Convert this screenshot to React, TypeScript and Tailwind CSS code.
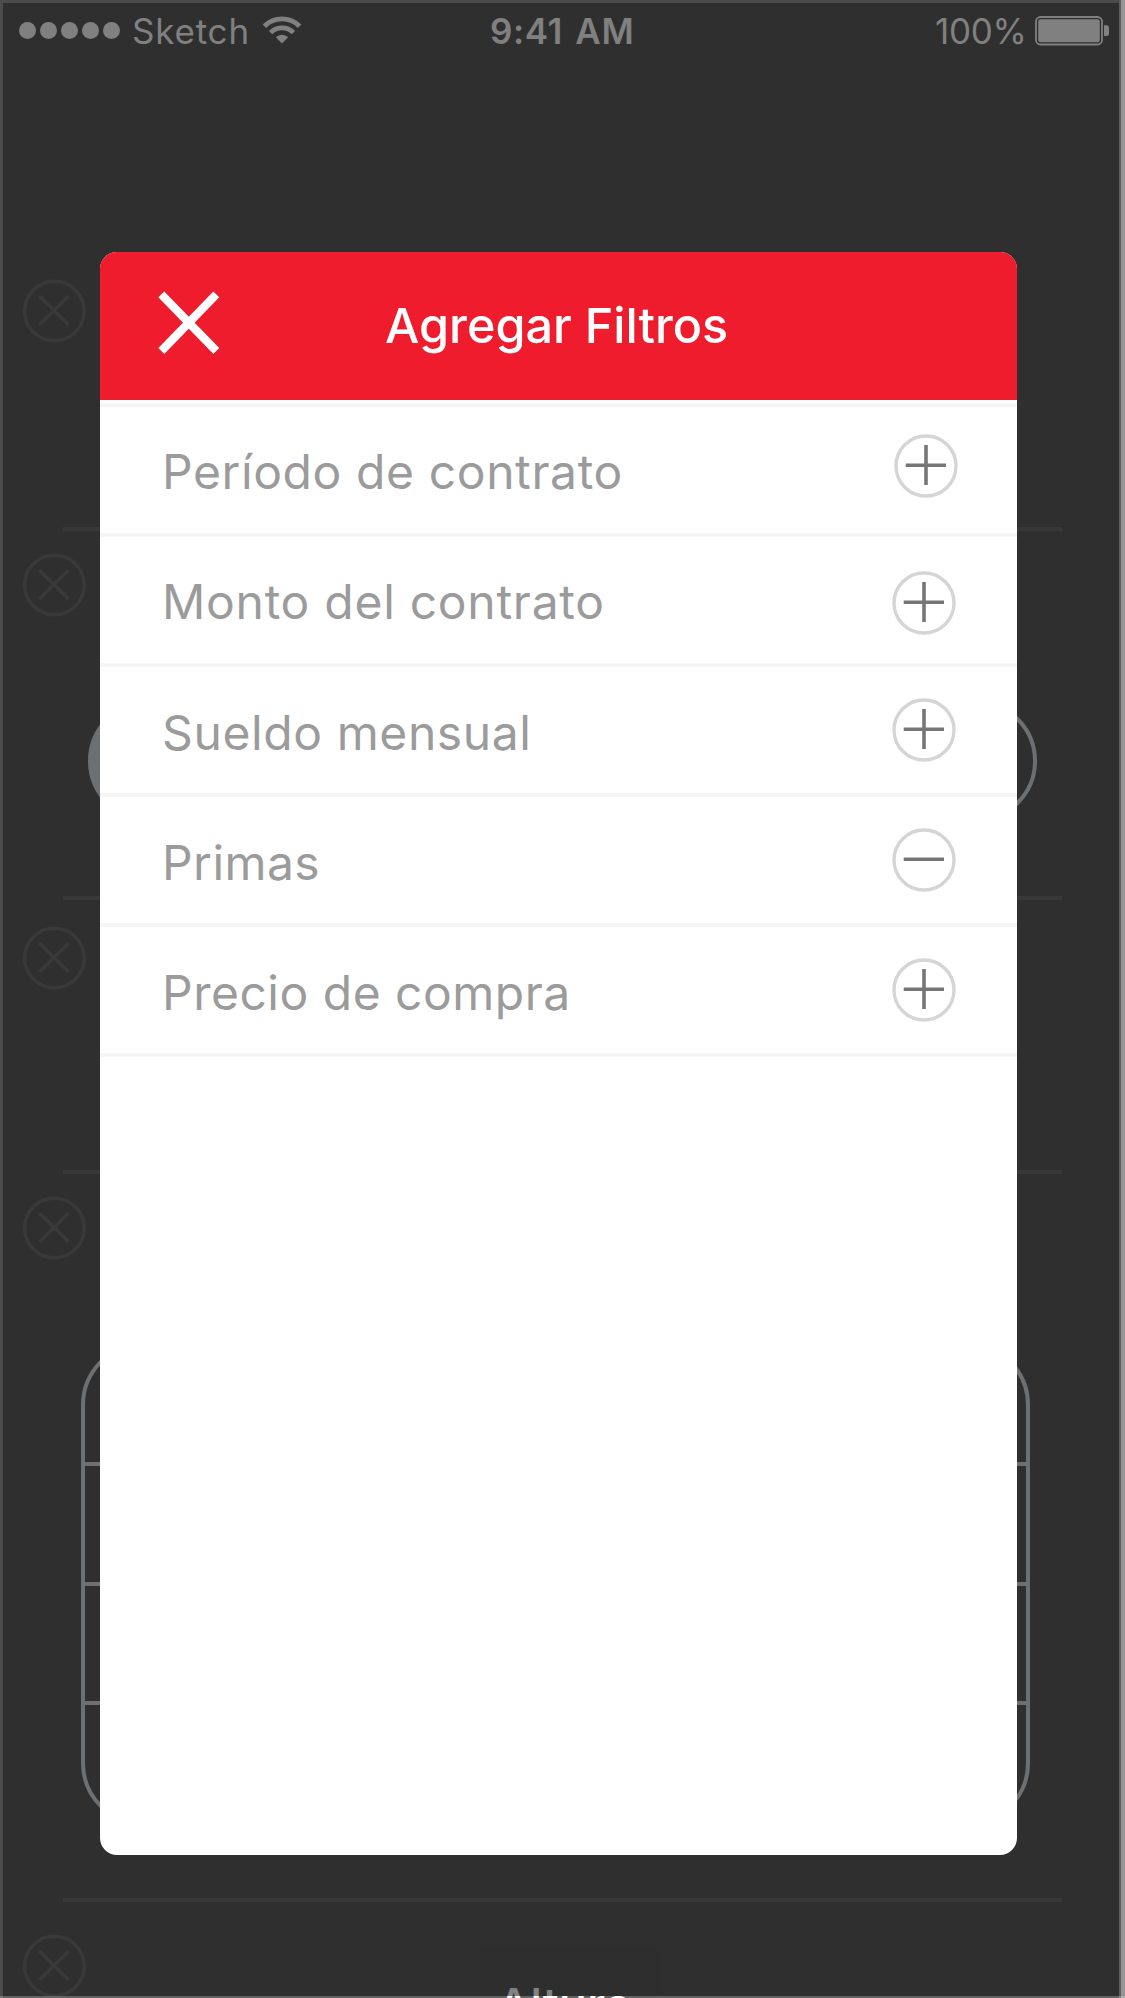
type Row = { label: string; labelClass: string; iconClass: string; open?: boolean };

const rows: Row[] = [
  { label: 'Período de contrato', labelClass: 'mt-[5px] tracking-[0.6px]', iconClass: 'mb-[8px] mr-[59px]' },
  { label: 'Monto del contrato', labelClass: 'mt-[5px] tracking-[0.72px]', iconClass: 'mt-[7px] mr-[61px]' },
  { label: 'Sueldo mensual', labelClass: 'mt-[7px] tracking-[0.6px]', iconClass: 'mt-[1px] mr-[61px]' },
  { label: 'Primas', labelClass: 'mt-[7px] tracking-[0.45px]', iconClass: 'mt-[1px] mr-[61px]', open: true },
  { label: 'Precio de compra', labelClass: 'mt-[7px] tracking-[0.5px]', iconClass: 'mt-[1px] mr-[61px]' },
];

function ToggleIcon({ minus, className }: { minus?: boolean; className: string }) {
  return (
    <svg className={`h-16 w-16 shrink-0 ${className}`} viewBox="0 0 64 64" fill="none">
      <circle cx="32" cy="32" r="30" stroke="#d5d5d5" strokeWidth="3.4" />
      <path d="M11.7 31.2H52" stroke="#767676" strokeWidth="3.6" />
      {!minus && <path d="M32 11V51" stroke="#767676" strokeWidth="3.6" />}
    </svg>
  );
}

function RemoveIcon() {
  return (
    <svg className="ml-[22px] h-16 w-16 shrink-0" viewBox="0 0 64 64" fill="none" stroke="#393939" strokeWidth="3.5">
      <circle cx="32.4" cy="32" r="29.8" />
      <path d="M17.4 17L46.6 46M46.6 17L17.4 46" />
    </svg>
  );
}

function Divider() {
  return <div className="mx-[63px] h-1 shrink-0 bg-[#383838]" />;
}

function StatusBar() {
  return (
    <header className="flex h-[57px] shrink-0 items-center text-[35px] leading-none text-[#808080]">
      <div className="flex w-[375px] items-center pl-[19px]">
        <div className="mt-[4px] flex gap-1">
          {[0, 1, 2, 3, 4].map((i) => (
            <span key={i} className="h-[17px] w-[17px] rounded-full bg-[#808080]" />
          ))}
        </div>
        <span className="mt-[6px] ml-[12px] w-[118px] tracking-[0.8px] whitespace-nowrap">Sketch</span>
        <svg className="mt-[3px] ml-[12px] h-[28px] w-[40px]" viewBox="262 16 40 28" fill="none" stroke="#808080">
          <path d="M264.4 26.2A24.9 24.9 0 0 1 299.6 26.2" strokeWidth="4.8" />
          <path d="M270.6 32.6A16 16 0 0 1 293.4 32.6" strokeWidth="4.8" />
          <path d="M282 43.5L275.8 37.3A8.8 8.8 0 0 1 288.2 37.3Z" fill="#808080" stroke="none" />
        </svg>
      </div>
      <span className="mt-[6px] w-[375px] pl-[115px] font-semibold tracking-[0.6px] [word-spacing:3px] whitespace-nowrap">9:41 AM</span>
      <div className="flex w-[375px] items-center">
        <span className="mt-[6px] ml-[185px] w-[90px] tracking-[-0.3px] whitespace-nowrap">100%</span>
        <svg className="mt-[4px] ml-[10px] h-[30px] w-[76px]" viewBox="1035 16 76 30" fill="none">
          <rect x="1036" y="17" width="66" height="27.5" rx="4.5" stroke="#808080" strokeWidth="1.8" />
          <rect x="1038.2" y="19.2" width="61.6" height="23.1" rx="2.5" fill="#808080" />
          <path d="M1104 25.3H1106.5Q1109 25.3 1109 28V33.5Q1109 36 1106.5 36H1104Z" fill="#808080" />
        </svg>
      </div>
    </header>
  );
}

function FilterPage() {
  return (
    <div className="flex h-full flex-col">
      <StatusBar />
      <section className="h-[470px] shrink-0 pt-[222px]">
        <RemoveIcon />
      </section>
      <Divider />
      <section className="h-[365px] shrink-0 pt-[22px]">
        <RemoveIcon />
        <div className="mt-[83px] ml-[88px] h-[122px] w-[949px] rounded-full border-4 border-[#6d7073] bg-linear-to-r from-[#6d7073] from-50% to-transparent to-50% bg-origin-border" />
      </section>
      <Divider />
      <section className="h-[270px] shrink-0 pt-[26px]">
        <RemoveIcon />
      </section>
      <Divider />
      <section className="h-[724px] shrink-0 pt-[22px]">
        <RemoveIcon />
        <div className="mt-[82px] ml-[81px] flex h-[484px] w-[949px] flex-col divide-y-4 divide-[#6d7073] overflow-hidden rounded-[63px] border-4 border-[#6d7073]">
          <div className="h-[120px] shrink-0" />
          <div className="h-[120px] shrink-0" />
          <div className="h-[119px] shrink-0" />
          <div className="flex-1" />
        </div>
      </section>
      <Divider />
      <section className="flex h-[96px] shrink-0 overflow-hidden pt-[32px]">
        <RemoveIcon />
        <h2 className="mt-[47px] ml-[411px] text-[47px] leading-none font-medium text-white">Altura</h2>
      </section>
    </div>
  );
}

function FilterModal() {
  return (
    <div className="absolute top-[252px] left-[99.5px] flex h-[1603.3px] w-[917.5px] flex-col overflow-hidden rounded-[17px] bg-white">
      <div className="flex h-[147.7px] shrink-0 items-center bg-[#ee1c2c]">
        <svg className="mb-[5px] ml-[58.5px] h-[64px] w-[62px]" viewBox="159 291 62 64" stroke="white" strokeWidth="8.3">
          <path d="M162.3 294.3L217.3 351M217.3 294.3L162.3 351" />
        </svg>
        <h1 className="ml-[165px] text-[48.5px] leading-none font-medium whitespace-nowrap text-white">Agregar Filtros</h1>
      </div>
      <div className="mt-[3.3px] h-1 shrink-0 bg-[#f5f5f5]" />
      <ul>
        {rows.map((row) => (
          <li key={row.label} className="flex h-[130px] items-center justify-between border-b-4 border-[#f5f5f5] pl-[62.5px]">
            <span className={`text-[48px] leading-none whitespace-nowrap text-[#9b9b9b] ${row.labelClass}`}>{row.label}</span>
            <ToggleIcon minus={row.open} className={row.iconClass} />
          </li>
        ))}
      </ul>
    </div>
  );
}

export default function App() {
  return (
    <div className="relative h-[1998px] w-[1125px] overflow-hidden bg-[#2f2f2f] font-['Inter',sans-serif]">
      <FilterPage />
      <div className="absolute bottom-[2px] left-[480px] h-12 w-[180px] bg-[#2f2f2f]/60" />
      <div className="absolute inset-x-0 top-0 h-[3.3px] bg-[#4c4c4c]" />
      <div className="absolute inset-y-0 left-0 w-[3.3px] bg-[#4c4c4c]" />
      <div className="absolute inset-y-0 right-[4px] w-[2px] bg-[#5c5c5c]" />
      <div className="absolute inset-y-0 right-0 w-1 bg-[#969494]" />
      <div className="absolute inset-x-0 bottom-0 h-[2px] bg-white/25" />
      <FilterModal />
    </div>
  );
}
